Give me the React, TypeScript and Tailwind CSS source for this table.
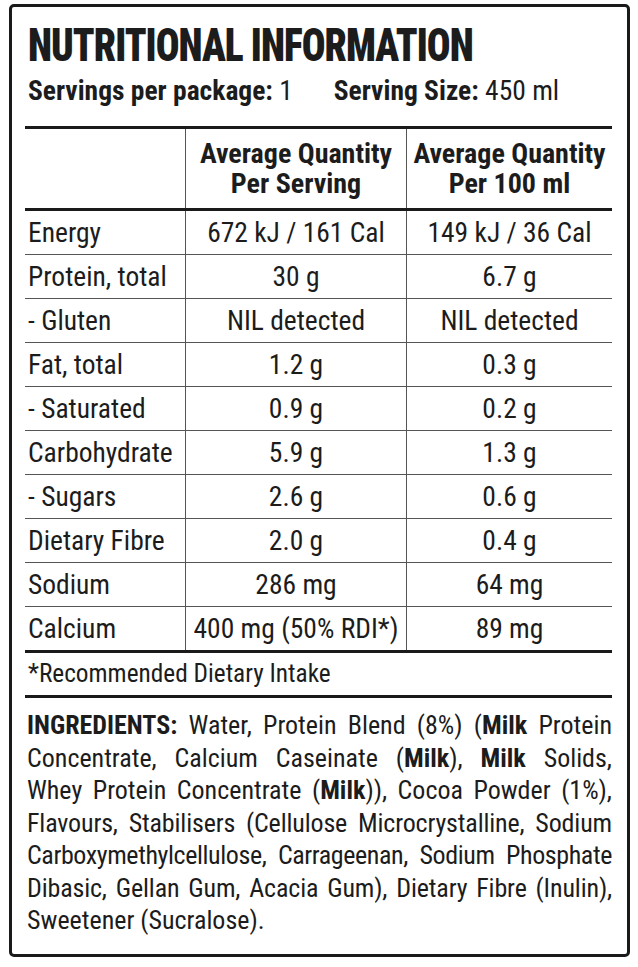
import React from "react";

const rows = [
  ["Energy", "672 kJ / 161 Cal", "149 kJ / 36 Cal"],
  ["Protein, total", "30 g", "6.7 g"],
  ["- Gluten", "NIL detected", "NIL detected"],
  ["Fat, total", "1.2 g", "0.3 g"],
  ["- Saturated", "0.9 g", "0.2 g"],
  ["Carbohydrate", "5.9 g", "1.3 g"],
  ["- Sugars", "2.6 g", "0.6 g"],
  ["Dietary Fibre", "2.0 g", "0.4 g"],
  ["Sodium", "286 mg", "64 mg"],
  ["Calcium", "400 mg (50% RDI*)", "89 mg"],
];

function Milk() {
  return <span className="font-bold">Milk</span>;
}

export default function App() {
  return (
    <div className="bg-white w-[638px] h-[967px] pt-[4px] pl-[9px] text-[#1c1c1c] font-['Roboto_Condensed',Roboto,sans-serif] [font-stretch:condensed]">
      <div className="w-[621px] h-[953px] border-[3px] border-[#1a1a1a] rounded-[5px] pl-[13px] pr-[15px]">
        <div className="mt-[14px] ml-[3px] w-max origin-left scale-x-[0.84] text-[47px] leading-[47px] font-black tracking-tight">
          NUTRITIONAL INFORMATION
        </div>
        <div className="mt-[8px] pl-[3px] text-[27.5px] leading-[30px] flex">
          <span>
            <b>Servings per package:</b> 1
          </span>
          <span className="ml-[41px]">
            <b>Serving Size:</b> 450 ml
          </span>
        </div>

        <div className="mt-[20px] w-[587px]">
          <div className="grid grid-cols-[160px_222px_205px] h-[85px] border-y-[3px] border-[#1a1a1a]">
            <div />
            <div className="border-x border-[#555] flex flex-col items-center justify-center text-[28px] leading-[30px] font-bold">
              <span>Average Quantity</span>
              <span>Per Serving</span>
            </div>
            <div className="flex flex-col items-center justify-center text-[28px] leading-[30px] font-bold">
              <span>Average Quantity</span>
              <span>Per 100 ml</span>
            </div>
          </div>

          {rows.map((r, i) => (
            <div
              key={r[0]}
              className={
                i < rows.length - 1
                  ? "grid grid-cols-[160px_222px_205px] h-[44px] border-b border-[#555] text-[27.5px]"
                  : "grid grid-cols-[160px_222px_205px] h-[43px] text-[27.5px]"
              }
            >
              <div className="flex items-center pl-[3px] whitespace-nowrap">{r[0]}</div>
              <div className="flex items-center justify-center border-x border-[#555] whitespace-nowrap">{r[1]}</div>
              <div className="flex items-center justify-center whitespace-nowrap">{r[2]}</div>
            </div>
          ))}

          <div className="h-[48px] border-y-[3px] border-[#1a1a1a] flex items-center pl-[3px] text-[25.3px]">
            *Recommended Dietary Intake
          </div>
        </div>

        <div className="mt-[11px] w-[587px] pl-[2px] text-[26px] leading-[32.5px] whitespace-nowrap">
          <div className="text-justify [text-align-last:justify]">
            <b>INGREDIENTS:</b> Water, Protein Blend (8%) (<Milk /> Protein
          </div>
          <div className="text-justify [text-align-last:justify]">
            Concentrate, Calcium Caseinate (<Milk />), <Milk /> Solids,
          </div>
          <div className="text-justify [text-align-last:justify]">
            Whey Protein Concentrate (<Milk />)), Cocoa Powder (1%),
          </div>
          <div className="text-justify [text-align-last:justify] tracking-[-0.15px]">
            Flavours, Stabilisers (Cellulose Microcrystalline, Sodium
          </div>
          <div className="text-justify [text-align-last:justify] tracking-[-0.4px]">
            Carboxymethylcellulose, Carrageenan, Sodium Phosphate
          </div>
          <div className="text-justify [text-align-last:justify] tracking-[-0.15px]">
            Dibasic, Gellan Gum, Acacia Gum), Dietary Fibre (Inulin),
          </div>
          <div>Sweetener (Sucralose).</div>
        </div>
      </div>
    </div>
  );
}
